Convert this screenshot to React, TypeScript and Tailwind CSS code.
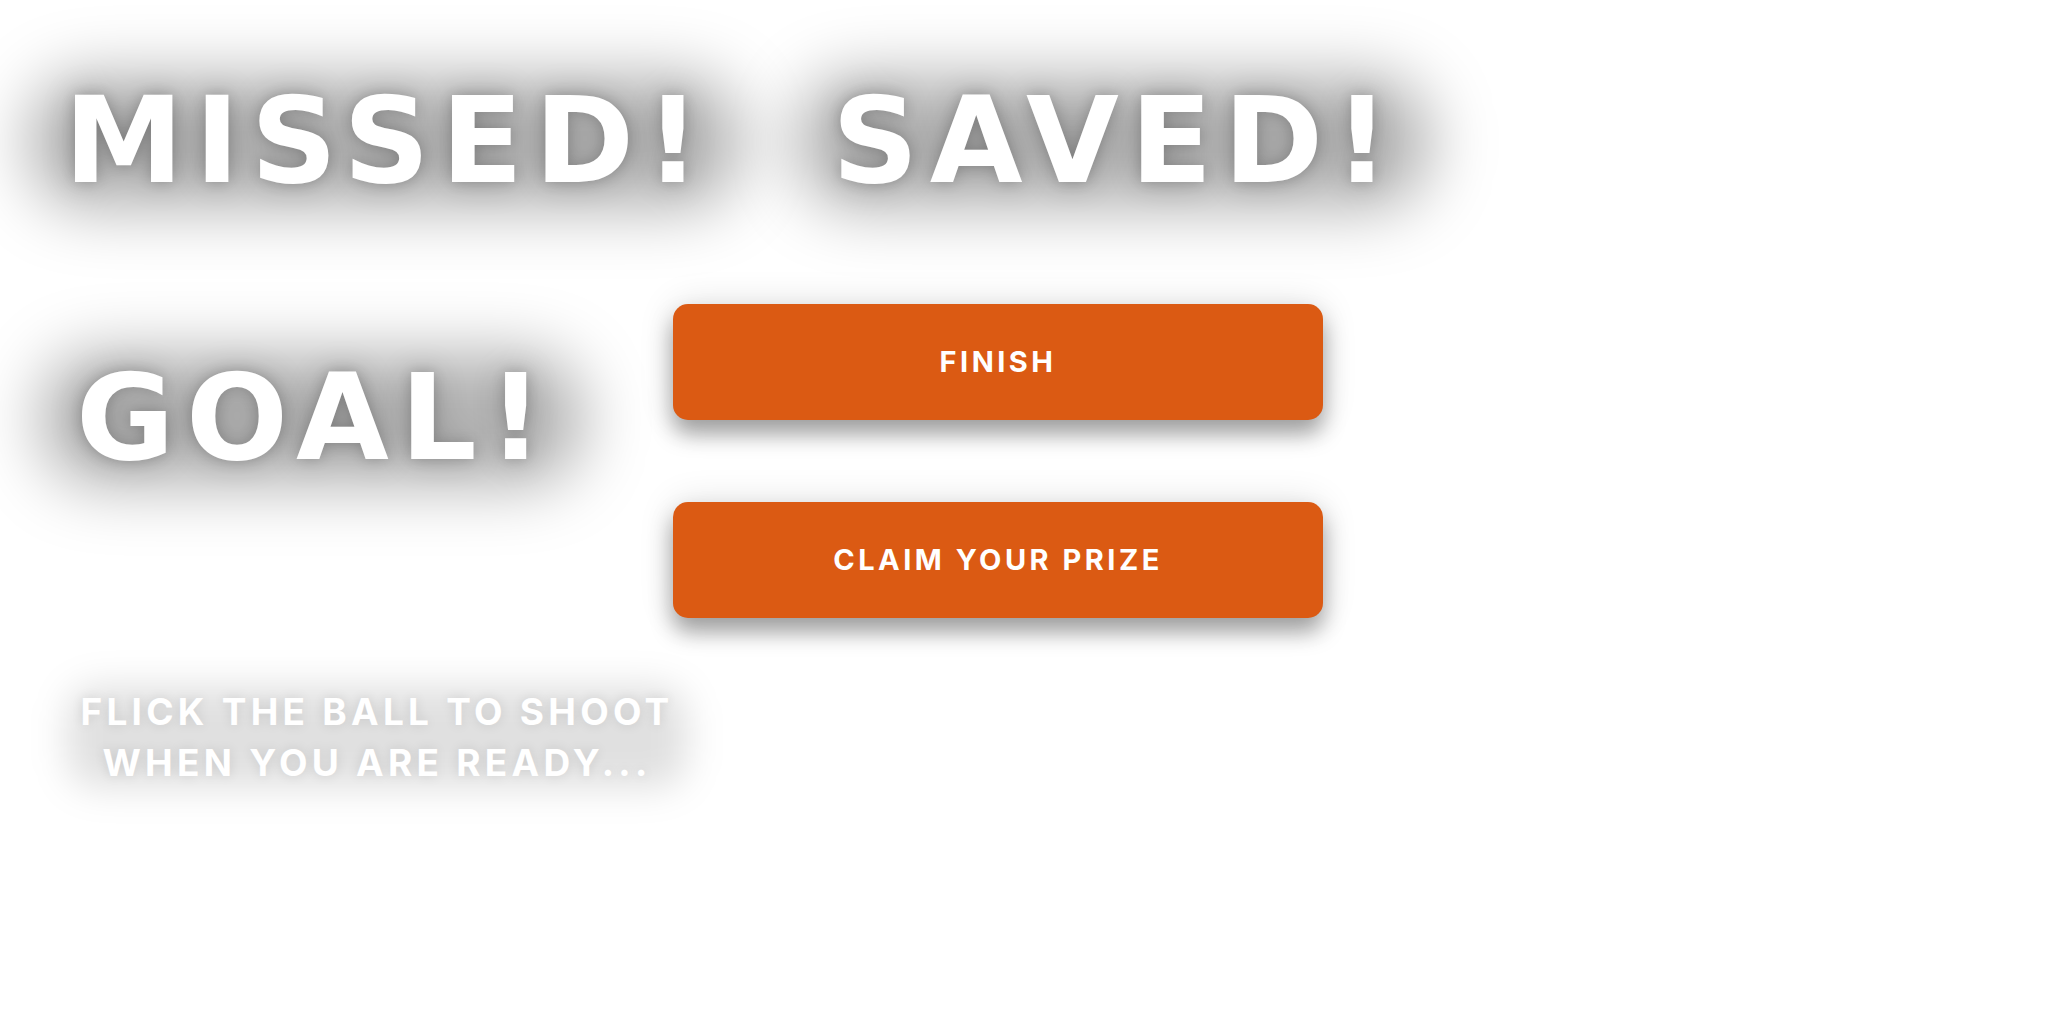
const titleFont = { fontFamily: '"DejaVu Sans", Inter, sans-serif' };
const bodyFont = { fontFamily: 'Inter, Lato, sans-serif' };

function Title({ text }: { text: string }) {
  return (
    <div className="relative inline-block">
      {/* soft grey glow behind the word */}
      <span className="absolute left-[-36px] right-[-30px] top-[-6px] bottom-[-8px] rounded-[60px] bg-black/30 blur-[32px]" />
      <div
        className="relative font-bold text-white text-[120px] leading-none tracking-[0.095em] whitespace-nowrap [text-shadow:0_0_14px_rgba(0,0,0,0.2),0_0_34px_rgba(0,0,0,0.2)]"
        style={titleFont}
      >
        {text}
      </div>
    </div>
  );
}

function OrangeButton({ label }: { label: string }) {
  return (
    <button
      type="button"
      className="w-[650px] h-[116px] rounded-[15px] bg-[#db5a13] text-white text-[29px] font-bold tracking-[0.12em] flex items-center justify-center shadow-[0_14px_22px_rgba(0,0,0,0.34),0_0_36px_rgba(0,0,0,0.12)]"
      style={bodyFont}
    >
      {label}
    </button>
  );
}

export default function App() {
  return (
    <div className="w-[2048px] h-[1024px] bg-white overflow-hidden pt-[81px]">
      {/* Result banners */}
      <div className="flex items-start pl-[64px]">
        <div className="w-[768px]">
          <Title text="MISSED!" />
        </div>
        <Title text="SAVED!" />
      </div>

      <div className="flex items-start mt-[103px]">
        <div className="pl-[76px] mt-[54px] w-[673px]">
          <Title text="GOAL!" />
        </div>

        {/* Actions */}
        <div className="flex flex-col gap-[82px]">
          <OrangeButton label="FINISH" />
          <OrangeButton label="CLAIM YOUR PRIZE" />
        </div>
      </div>

      {/* Hint */}
      <div className="relative mt-[68px] ml-[47px] w-[660px]">
        <span className="absolute left-[20px] right-[20px] top-[0px] bottom-[0px] rounded-[30px] bg-black/12 blur-[18px]" />
        <div
          className="relative text-center text-white font-bold text-[37px] leading-[51px] tracking-[0.115em] [text-shadow:0_0_12px_rgba(0,0,0,0.12)]"
          style={bodyFont}
        >
          FLICK THE BALL TO SHOOT
          <br />
          WHEN YOU ARE READY...
        </div>
      </div>
    </div>
  );
}
